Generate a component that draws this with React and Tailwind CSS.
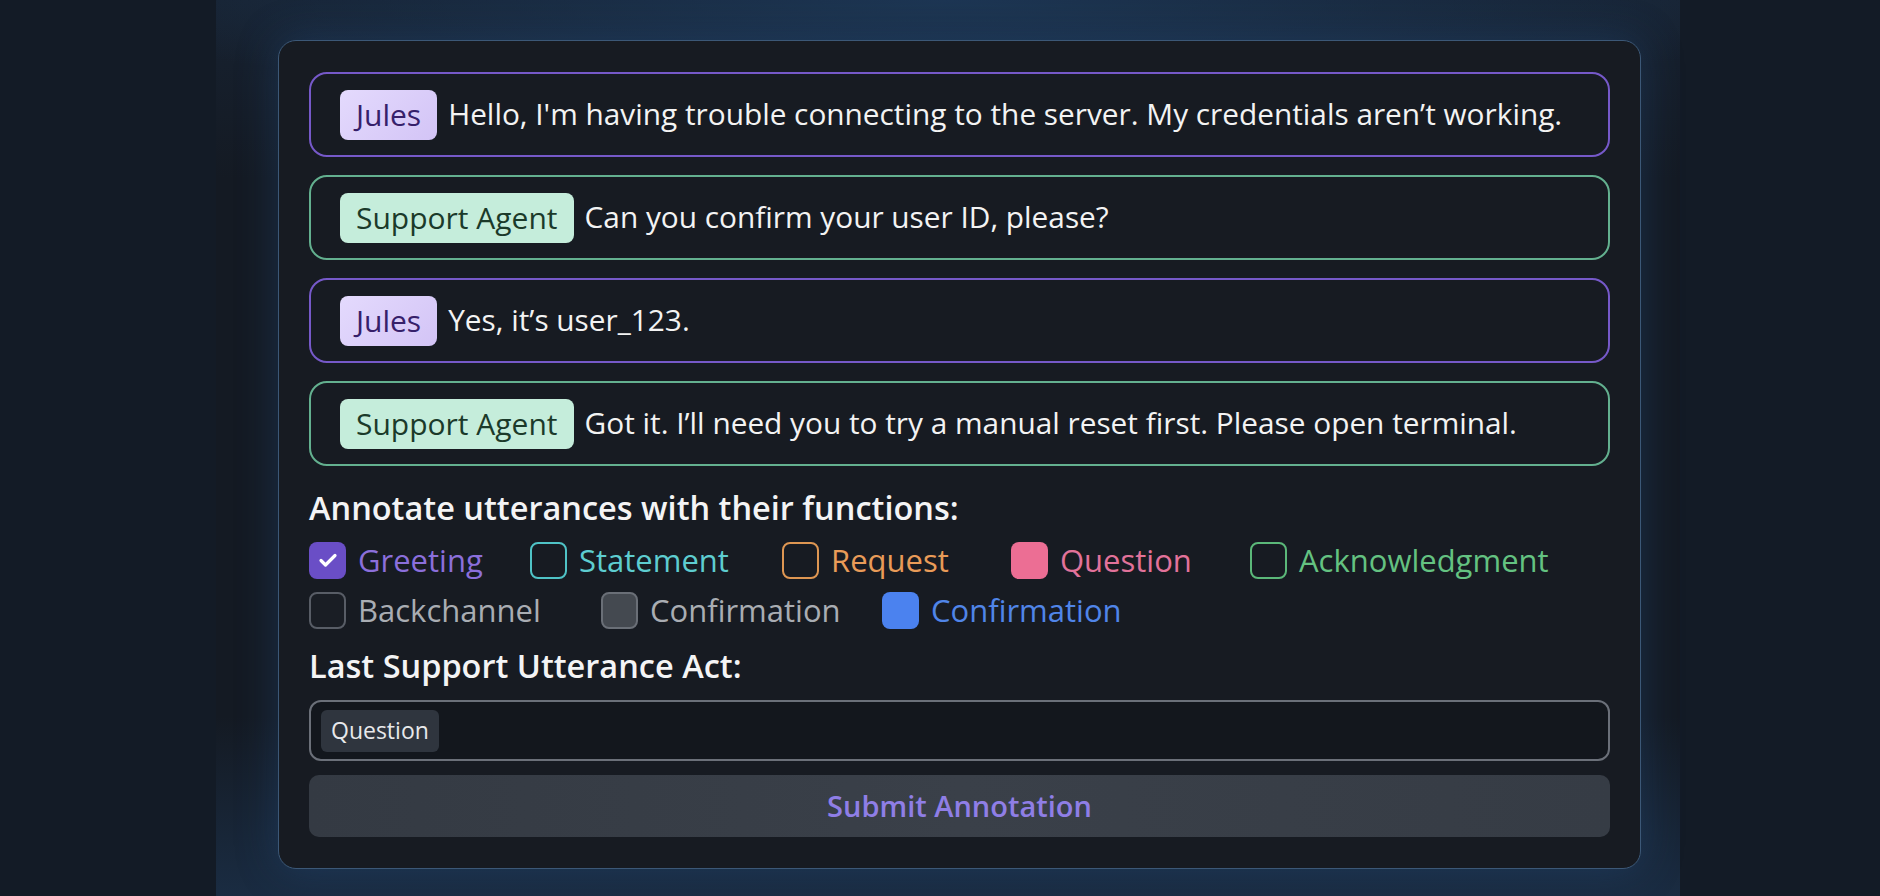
import React from 'react';

const FONT = { fontFamily: '"Open Sans", "Noto Sans", sans-serif' };

const messages = [
  { who: 'Jules', text: "Hello, I'm having trouble connecting to the server. My credentials aren\u2019t working." },
  { who: 'Support Agent', text: 'Can you confirm your user ID, please?' },
  { who: 'Jules', text: 'Yes, it\u2019s user_123.' },
  { who: 'Support Agent', text: 'Got it. I\u2019ll need you to try a manual reset first. Please open terminal.' },
];

const Check = () => (
  <svg viewBox="0 0 24 24" className="w-[24px] h-[24px]" fill="none" stroke="white" strokeWidth="3.2" strokeLinecap="round" strokeLinejoin="round">
    <path d="M5 12.5l4.5 4.5L19 7.5" />
  </svg>
);

const Option = ({ label, box, text, width, checked }) => (
  <div className={`flex items-center gap-[12px] ${width}`}>
    <span className={`w-[37px] h-[37px] rounded-[8px] flex items-center justify-center shrink-0 ${box}`}>
      {checked && <Check />}
    </span>
    <span className={`text-[31px] leading-[40px] ${text}`}>{label}</span>
  </div>
);

export default function App() {
  return (
    <div className="min-h-screen h-[896px] bg-[#131b26] flex overflow-hidden" style={FONT}>
      <div className="ml-[216px] w-[1464px] h-full bg-[radial-gradient(ellipse_60%_12%_at_50%_0%,#1d3653,transparent),linear-gradient(to_bottom,#172231_0%,#141a23_20%,#141a23_80%,#1a2c42_100%)] pt-[40px] pl-[62px]">
        <div className="w-[1363px] h-[829px] rounded-[18px] border-[1.5px] border-[#3c5877] bg-[#171b22] shadow-[0_0_40px_rgba(40,90,150,0.35)] px-[30px] pt-[31px]">
          <div className="flex flex-col gap-[18px]">
            {messages.map((m, i) => {
              const jules = m.who === 'Jules';
              return (
                <div
                  key={i}
                  className={`h-[85px] rounded-[18px] border-2 flex items-center pl-[29px] gap-[11px] ${
                    jules ? 'border-[#7659c9]' : 'border-[#63b08f]'
                  }`}
                >
                  <span
                    className={`h-[50px] px-[16px] rounded-[8px] flex items-center text-[30px] ${
                      jules
                        ? 'bg-[linear-gradient(135deg,#e4dafd,#d3c4f6)] text-[#36206a]'
                        : 'bg-[#c5eddb] text-[#1b3a2a]'
                    }`}
                  >
                    {m.who}
                  </span>
                  <span className="text-[29.8px] text-[#f3f3f3]">{m.text}</span>
                </div>
              );
            })}
          </div>

          <h2 className="mt-[22px] text-[32.5px] leading-[40px] font-semibold text-[#f4f4f5]">
            Annotate utterances with their functions:
          </h2>

          <div className="mt-[12px] flex">
            <Option label="Greeting" width="w-[221px]" checked box="bg-[#6a4ec6]" text="text-[#8b6fdb]" />
            <Option label="Statement" width="w-[252px]" box="border-[2.5px] border-[#4fc3c6]" text="text-[#5ecdd0]" />
            <Option label="Request" width="w-[229px]" box="border-[2.5px] border-[#de9652]" text="text-[#e99b58]" />
            <Option label="Question" width="w-[239px]" box="bg-[#ec6e94]" text="text-[#e2729a]" />
            <Option label="Acknowledgment" width="" box="border-[2.5px] border-[#5bb879]" text="text-[#64c281]" />
          </div>
          <div className="mt-[10px] flex">
            <Option label="Backchannel" width="w-[292px]" box="border-[2.5px] border-[#585d66] bg-[#1a1e25]" text="text-[#a9adb3]" />
            <Option label="Confirmation" width="w-[281px]" box="border-[2.5px] border-[#6a6f77] bg-[#444950]" text="text-[#a9adb3]" />
            <Option label="Confirmation" width="" box="bg-[#4b82ef]" text="text-[#5085e8]" />
          </div>

          <h3 className="mt-[16px] text-[32.5px] leading-[40px] font-semibold text-[#f4f4f5]">
            Last Support Utterance Act:
          </h3>

          <div className="mt-[14px] h-[61px] rounded-[12px] border-2 border-[#6b7079] bg-[#13171d] flex items-center px-[10px]">
            <span className="h-[42px] px-[10px] rounded-[6px] bg-[#2f353e] text-[#e8e9eb] text-[23px] flex items-center">
              Question
            </span>
          </div>

          <button className="mt-[14px] w-full h-[62px] rounded-[10px] bg-[linear-gradient(90deg,#343a43,#3a4049,#363c45)] text-[#8f7ee6] text-[29px] font-semibold">
            Submit Annotation
          </button>
        </div>
      </div>
    </div>
  );
}
